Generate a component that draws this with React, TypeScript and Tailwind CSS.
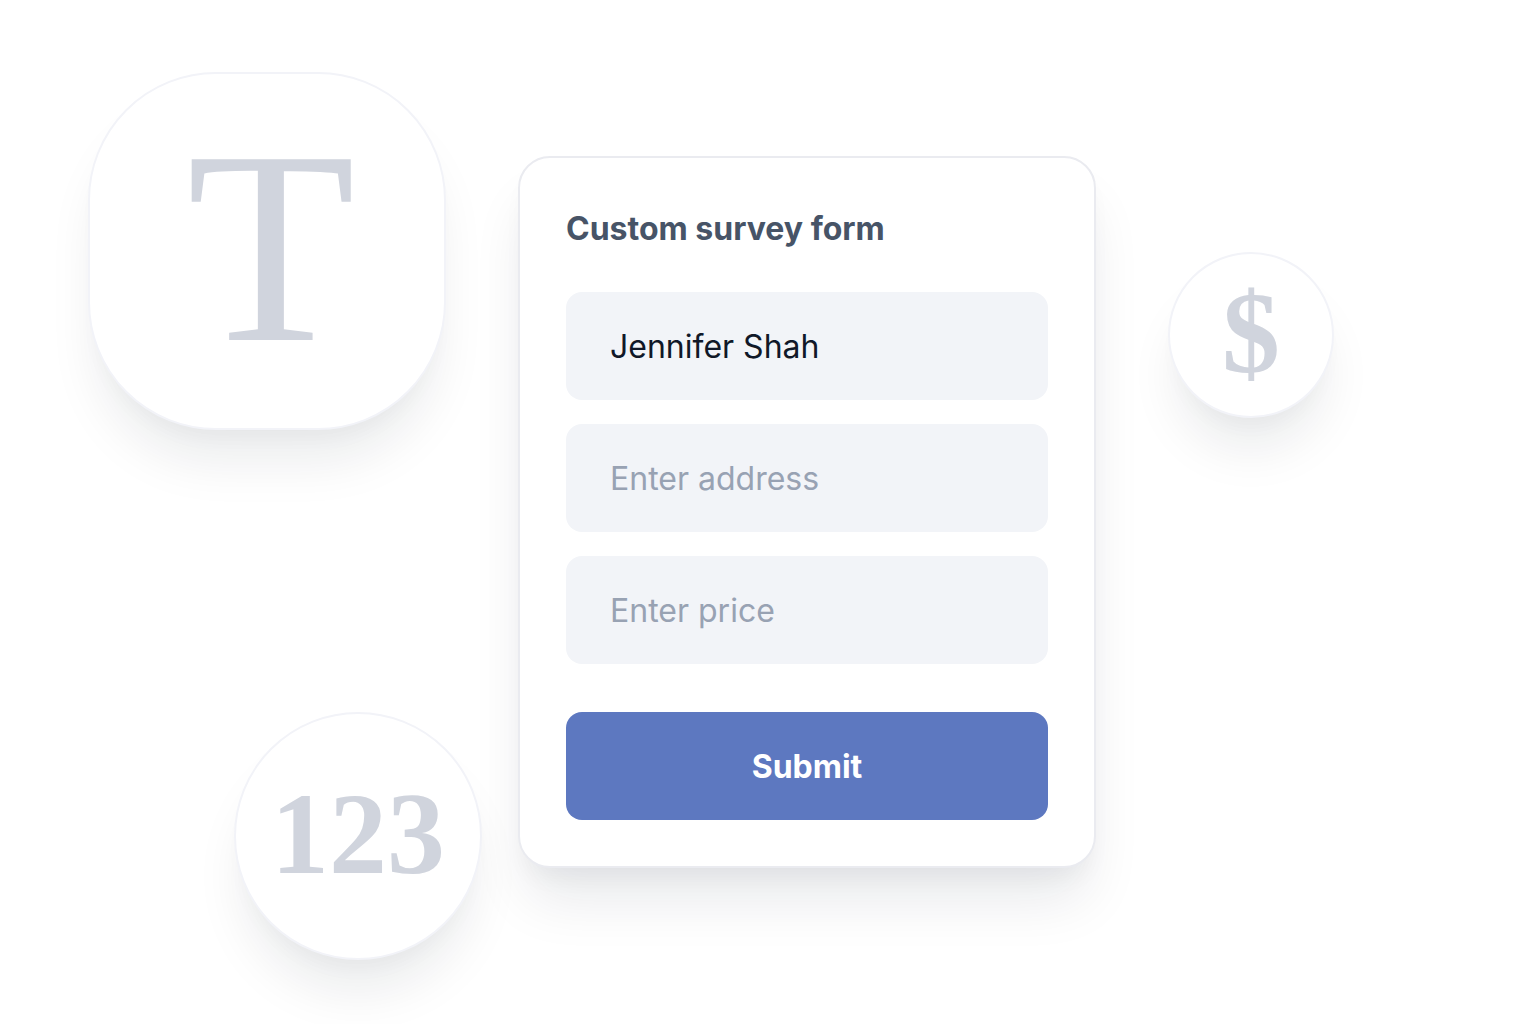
import type { ReactNode } from 'react';

interface FieldType {
  name: string;
  label: string;
  defaultValue?: string;
}

const fields: FieldType[] = [
  { name: 'name', label: 'Enter name', defaultValue: 'Jennifer Shah' },
  { name: 'address', label: 'Enter address' },
  { name: 'price', label: 'Enter price' }
];

interface BadgeProps {
  className: string;
  children: ReactNode;
}

function Badge({ className, children }: BadgeProps) {
  return (
    <div
      className={`flex shrink-0 items-center justify-center border-2 border-[#f2f3f8] bg-white font-['Liberation_Serif',serif] leading-none text-[#d0d4dd] shadow-[0_40px_50px_-8px_rgba(16,24,40,0.08),0_16px_20px_-8px_rgba(16,24,40,0.03)] ${className}`}
    >
      {children}
    </div>
  );
}

function SurveyForm() {
  return (
    <form
      className="w-full max-w-[578px] rounded-[32px] border-2 border-[#eaebf0] bg-white p-[46px] shadow-[0_40px_56px_-8px_rgba(16,24,40,0.09),0_16px_24px_-8px_rgba(16,24,40,0.05)]"
      onSubmit={(e) => e.preventDefault()}
    >
      <h1 className="mb-[38px] text-[32px] leading-[50px] font-bold text-[#475467]">
        Custom survey form
      </h1>
      <div className="flex flex-col gap-6">
        {fields.map((field) => (
          <input
            key={field.name}
            type="text"
            name={field.name}
            aria-label={field.label}
            placeholder={field.label}
            defaultValue={field.defaultValue}
            className="h-[108px] w-full rounded-2xl bg-[#f2f4f8] px-11 text-[32px] text-[#101828] outline-none placeholder:text-[#98a2b3]"
          />
        ))}
      </div>
      <button
        type="submit"
        className="mt-12 h-[108px] w-full rounded-2xl bg-[#5d78c0] pt-0.5 text-[32px] font-bold text-white"
      >
        Submit
      </button>
    </form>
  );
}

export default function App() {
  return (
    <main className="flex min-h-screen items-start overflow-hidden bg-white pt-[72px] pr-12 pb-16 pl-[88px] font-['Inter',sans-serif]">
      <div className="mr-9 flex w-[394px] shrink-0 flex-col gap-[282px]">
        <Badge className="size-[358px] self-start rounded-[128px] pb-2 pl-2 text-[276px]">T</Badge>
        <Badge className="size-[248px] self-end rounded-full pb-1 text-[116px] font-bold">123</Badge>
      </div>
      <div className="mt-[84px] flex grow items-start gap-[72px]">
        <SurveyForm />
        <Badge className="mt-24 size-[166px] rounded-full pb-1 text-[116px] font-bold">$</Badge>
      </div>
    </main>
  );
}
